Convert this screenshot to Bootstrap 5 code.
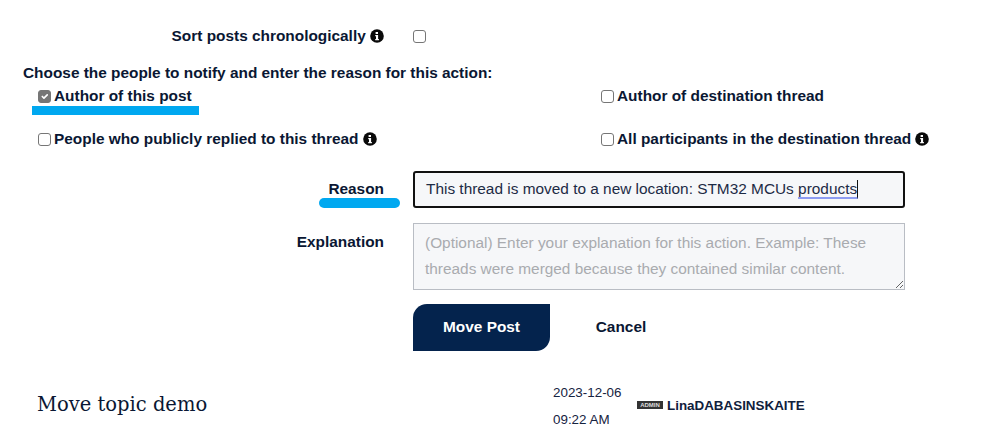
<!DOCTYPE html>
<html lang="en">
<head>
<meta charset="utf-8">
<title>Move post</title>
<link href="https://cdn.jsdelivr.net/npm/bootstrap@5.3.0/dist/css/bootstrap.min.css" rel="stylesheet">
<script src="https://cdn.jsdelivr.net/npm/bootstrap@5.3.0/dist/js/bootstrap.bundle.min.js"></script>
<style>
html,body{height:444px;overflow:hidden;background:#fff}
body{font-family:"Liberation Sans",Arial,sans-serif;color:#0a1733;font-size:16px}
.sheet{position:relative;width:999px;height:444px;padding-top:26px}
.lab{width:384px;text-align:right;font-weight:700;font-size:15.4px;line-height:20px;flex:none}
.reasonlab{padding-bottom:2px}
.explab{padding-top:9px}
.ctl{margin-left:29px;width:492px;flex:none}
.optline{font-weight:700;font-size:15.4px;line-height:20px}
.ck.form-check-input{width:13px;height:13px;margin:0 3px 0 0;border:1px solid #767676;border-radius:3px;flex:none;background-color:#fff;box-shadow:none}
.ck.form-check-input:checked{background-color:#767676;border-color:#767676}
.inf{width:14px;height:14px;flex:none;vertical-align:-2px}
.sortrow{height:20px}
.chooser{margin:17px 0 0 23px;font-weight:700;font-size:15.4px;line-height:20px}
.grid2{margin-left:38px;display:grid;grid-template-columns:563px 1fr;row-gap:23px;margin-top:3px}
.reasonrow{margin-top:22px;height:37px}
.reasonbox.form-control{height:37px;border:2px solid #111;border-radius:3px;background:#f6f7f9;color:#1d2b45;font-size:15.4px;line-height:20px;padding:6px 11px;box-shadow:none}
.spell{border-bottom:2px solid #8d9cf2;border-right:1px solid #111;display:inline-block;line-height:17px}
.explrow{margin-top:15px}
.expl.form-control{height:67px;border:1px solid #b9bdc4;border-radius:0;background:#f6f7f9;font-size:15.4px;line-height:26px;padding:6px 11px;box-shadow:none}
.expl::placeholder{color:#a9abaf;opacity:1}
.btnrow{margin-top:14px;margin-left:413px}
.go.btn{width:137px;height:47px;background:#04234d;color:#fff;font-weight:700;font-size:15.4px;border:0;border-radius:14px 0 14px 0;padding:0 0 2px}
.stop.btn{width:142px;height:47px;background:transparent;color:#0a1733;font-weight:700;font-size:15.4px;border:0;padding:0 0 2px}
.topicrow{margin-top:25px;height:60px}
.ttl{margin-left:37px;width:516px;flex:none;font-family:"DejaVu Serif",serif;font-size:19.5px;color:#0a1733;padding-bottom:3px}
.when{width:84px;flex:none;font-size:13.4px;line-height:27px;color:#16233f}
.who{font-size:13.4px;font-weight:700;color:#10203c}
.adm{display:inline-block;width:26px;height:8px;background:#333;color:#ddd;font-size:6px;line-height:8px;text-align:center;margin-right:4px;vertical-align:1px;font-weight:700;overflow:hidden}
.mark1{position:absolute;left:32px;top:106px;width:167px;height:9px;background:#00a8f0}
.mark2{position:absolute;left:319px;top:198px;width:81px;height:10px;background:#00a8f0;border-radius:5px}
</style>
</head>
<body>
<svg width="0" height="0" class="d-block" aria-hidden="true"><symbol id="ii" viewBox="0 0 14 14"><circle cx="7" cy="7" r="6.8" fill="#0a0a0a"/><path d="M5.6 2.9h2.4v2H5.6zM5.2 6h2.9v4h.8v1.3H5.2V10H6V7.3h-.8z" fill="#fff"/></symbol></svg>
<main class="sheet">
  <div class="d-flex align-items-center sortrow">
    <div class="lab">Sort posts chronologically <svg class="inf"><use href="#ii"/></svg></div>
    <div class="ctl d-flex"><input class="form-check-input ck" type="checkbox" aria-label="Sort posts chronologically"></div>
  </div>
  <div class="chooser">Choose the people to notify and enter the reason for this action:</div>
  <div class="grid2">
    <label class="optline d-flex align-items-center"><input class="form-check-input ck" type="checkbox" checked><span>Author of this post</span></label>
    <label class="optline d-flex align-items-center"><input class="form-check-input ck" type="checkbox"><span>Author of destination thread</span></label>
    <label class="optline d-flex align-items-center"><input class="form-check-input ck" type="checkbox"><span>People who publicly replied to this thread <svg class="inf"><use href="#ii"/></svg></span></label>
    <label class="optline d-flex align-items-center"><input class="form-check-input ck" type="checkbox"><span>All participants in the destination thread <svg class="inf"><use href="#ii"/></svg></span></label>
  </div>
  <div class="d-flex align-items-center reasonrow">
    <div class="lab reasonlab">Reason</div>
    <div class="ctl"><div class="form-control reasonbox">This thread is moved to a new location: STM32 MCUs <span class="spell">products</span></div></div>
  </div>
  <div class="d-flex explrow">
    <div class="lab explab">Explanation</div>
    <div class="ctl"><textarea class="form-control expl" placeholder="(Optional) Enter your explanation for this action. Example: These threads were merged because they contained similar content."></textarea></div>
  </div>
  <div class="d-flex btnrow">
    <button class="btn go" type="button">Move Post</button>
    <button class="btn stop" type="button">Cancel</button>
  </div>
  <div class="d-flex align-items-center topicrow">
    <div class="ttl">Move topic demo</div>
    <div class="when">2023-12-06<br>09:22 AM</div>
    <div class="who"><span class="adm">ADMIN</span>LinaDABASINSKAITE</div>
  </div>
  <div class="mark1"></div>
  <div class="mark2"></div>
</main>
</body>
</html>
